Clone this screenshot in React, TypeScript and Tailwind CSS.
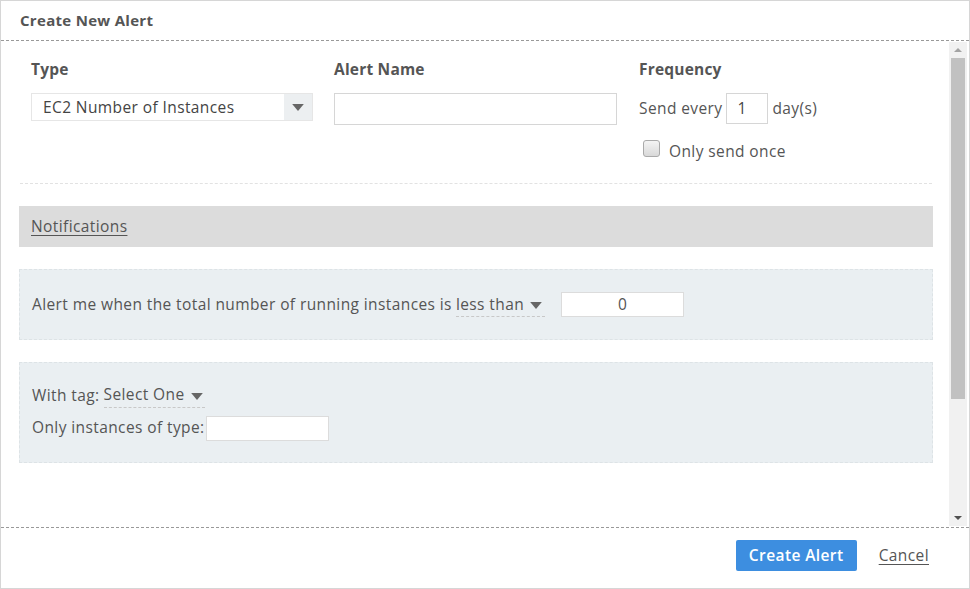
function Caret({ className = '' }: { className?: string }) {
  return (
    <svg viewBox="0 0 10 6" className={`w-[12px] h-[7px] fill-[#666] ${className}`}>
      <path d="M0 0h10L5 6z" />
    </svg>
  );
}

export default function App() {
  return (
    <div
      className="w-[970px] h-[589px] bg-white border border-[#d6d6d6] flex flex-col text-[#555] text-[15.5px] tracking-[0.4px]"
      style={{ fontFamily: '"Open Sans", "Liberation Sans", sans-serif' }}
    >
      {/* header */}
      <div className="h-[40px] flex items-center px-[19px] border-b border-dashed border-[#999]">
        <h1 className="text-[15px] font-bold tracking-[0.3px] text-[#555]">Create New Alert</h1>
      </div>

      {/* body + scrollbar */}
      <div className="flex flex-1 min-h-0">
        <div className="flex-1 pl-[18px] pr-[16px]">
          {/* top fields */}
          <div className="flex pt-[16px] pb-[20px] border-b border-dashed border-[#e2e2e2] mx-[1px]">
            <div className="w-[314px] pl-[11px]">
              <div className="text-[15.5px] font-bold tracking-[0.2px] h-[24px] leading-[24px]">Type</div>
              <div className="mt-[12px] w-[282px] h-[28px] flex border border-[#e6e6e6] bg-white">
                <span className="flex-1 px-[11px] leading-[27px] text-[#444] whitespace-nowrap">EC2 Number of Instances</span>
                <span className="w-[28px] bg-[#eceff1] flex items-center justify-center">
                  <Caret />
                </span>
              </div>
            </div>
            <div className="w-[305px]">
              <div className="text-[15.5px] font-bold tracking-[0.2px] h-[24px] leading-[24px]">Alert Name</div>
              <div className="mt-[12px] w-[283px] h-[32px] border border-[#d6d6d6] bg-white" />
            </div>
            <div className="flex-1">
              <div className="text-[15.5px] font-bold tracking-[0.2px] h-[24px] leading-[24px]">Frequency</div>
              <div className="mt-[12px] flex items-center gap-[4px] whitespace-nowrap">
                <span>Send every</span>
                <span className="w-[42px] h-[31px] border border-[#d6d6d6] px-[10px] leading-[29px] text-[#444]">1</span>
                <span>day(s)</span>
              </div>
              <label className="mt-[16px] ml-[4px] flex items-center gap-[9px] whitespace-nowrap">
                <span className="w-[17px] h-[17px] rounded-[3px] border border-[#aaa] bg-gradient-to-b from-[#f4f4f4] to-[#d9d9d9] -mt-[6px]" />
                <span>Only send once</span>
              </label>
            </div>
          </div>

          {/* notifications header */}
          <div className="mt-[22px] h-[41px] bg-[#dcdcdc] flex items-center px-[12px]">
            <span className="underline underline-offset-[3px]">Notifications</span>
          </div>

          {/* condition panel */}
          <div className="mt-[22px] h-[71px] bg-[#eaeff2] border border-dashed border-[#dde3e6] flex items-center px-[12px] whitespace-nowrap">
            <span>Alert me when the total number of running instances is</span>
            <span className="ml-[4px] flex items-center gap-[6px] border-b border-dashed border-[#c8c8c8] pr-[3px]">
              less than
              <Caret className="mt-[3px]" />
            </span>
            <span className="ml-[16px] w-[123px] h-[25px] bg-white border border-[#dcdcdc] text-center leading-[23px]">0</span>
          </div>

          {/* filter panel */}
          <div className="mt-[22px] h-[101px] bg-[#eaeff2] border border-dashed border-[#dde3e6] px-[12px] pt-[20px] whitespace-nowrap">
            <div className="flex items-center">
              <span>With tag:</span>
              <span className="ml-[4px] flex items-center gap-[6px] border-b border-dashed border-[#c8c8c8] pr-[2px]">
                Select One
                <Caret className="mt-[3px]" />
              </span>
            </div>
            <div className="mt-[8px] flex items-center">
              <span>Only instances of type:</span>
              <span className="ml-[1px] w-[123px] h-[25px] bg-white border border-[#dcdcdc]" />
            </div>
          </div>
        </div>

        {/* scrollbar */}
        <div className="w-[18px] mr-[2px] my-[1px] bg-[#f1f1f1] flex flex-col items-center">
          <div className="h-[16px] flex items-center justify-center">
            <svg viewBox="0 0 8 4" className="w-[8px] h-[4px] fill-[#a3a3a3]"><path d="M0 4h8L4 0z" /></svg>
          </div>
          <div className="w-[14px] h-[341px] bg-[#c1c1c1]" />
          <div className="flex-1" />
          <div className="h-[16px] flex items-center justify-center">
            <svg viewBox="0 0 8 4" className="w-[8px] h-[4px] fill-[#505050]"><path d="M0 0h8L4 4z" /></svg>
          </div>
        </div>
      </div>

      {/* footer */}
      <div className="h-[61px] border-t border-dashed border-[#999] flex items-start justify-end gap-[22px] pr-[40px] pt-[12px]">
        <button className="w-[121px] h-[31px] bg-[#3d8ee0] rounded-[2px] text-white text-[15.5px] font-semibold tracking-[0.4px]">Create Alert</button>
        <a className="mt-[4px] underline underline-offset-[3px] text-[#555]">Cancel</a>
      </div>
    </div>
  );
}
